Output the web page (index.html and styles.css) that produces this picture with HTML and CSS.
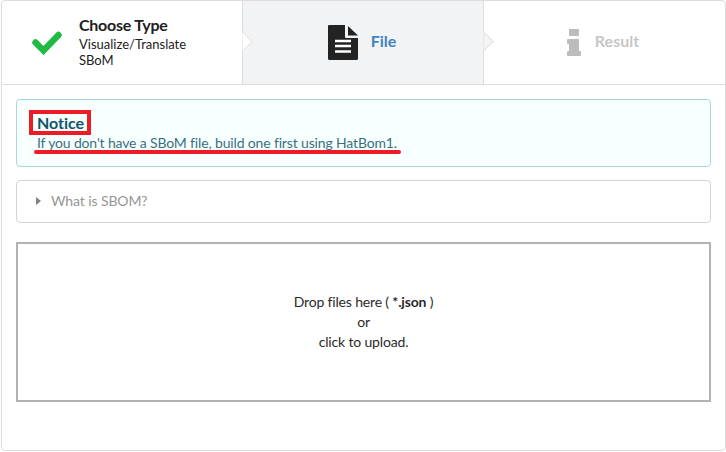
FILE: index.html
```html
<!DOCTYPE html>
<html lang="en">
<head>
<meta charset="utf-8">
<title>SBoM upload</title>
<link rel="stylesheet" href="styles.css">
</head>
<body>
<main class="panel">
  <div class="steps">
    <div class="step step-first">
      <svg class="icon-check" width="30" height="24" viewBox="0 0 30 24" aria-hidden="true"><path d="M3.5 11.5 L11.5 19.5 L26.5 4" fill="none" stroke="#21ba45" stroke-width="6.4" stroke-linejoin="miter" stroke-linecap="round"/></svg>
      <div class="step-text">
        <div class="step-title">Choose Type</div>
        <div class="step-desc">Visualize/Translate<br>SBoM</div>
      </div>
      <span class="chevron"></span>
    </div>
    <div class="step step-active">
      <svg class="icon-file" width="30" height="35" viewBox="0 0 30 35" aria-hidden="true">
        <path d="M1 0 H17 V12 a1 1 0 0 0 1 1 H30 V33.5 a1.5 1.5 0 0 1 -1.5 1.5 H1.5 A1.5 1.5 0 0 1 0 33.5 V1 A1 1 0 0 1 1 0 Z" fill="#232323"/>
        <path d="M20 1 L30 10.5 H20 Z" fill="#232323"/>
        <path d="M7 16 H23 M7 21 H23 M7 26.5 H23" stroke="#fff" stroke-width="2.4"/>
      </svg>
      <div class="step-label label-active">File</div>
      <span class="chevron chevron-active"></span>
    </div>
    <div class="step step-disabled">
      <svg class="icon-info" width="14" height="27" viewBox="0 0 14 27" aria-hidden="true">
        <path d="M3 0 H11 a1 1 0 0 1 1 1 V6 a1 1 0 0 1 -1 1 H3 a1 1 0 0 1 -1 -1 V1 a1 1 0 0 1 1 -1 Z M1 10 H11 a1 1 0 0 1 1 1 V22 H13 a1 1 0 0 1 1 1 V26 a1 1 0 0 1 -1 1 H1 a1 1 0 0 1 -1 -1 V23 a1 1 0 0 1 1 -1 H2 V15 H1 a1 1 0 0 1 -1 -1 V11 a1 1 0 0 1 1 -1 Z" fill="#bcbcbc"/>
      </svg>
      <div class="step-label label-disabled">Result</div>
    </div>
  </div>
  <div class="content">
    <div class="notice">
      <div class="notice-title"><span class="mark-box">Notice</span></div>
      <div class="notice-text"><span class="mark-line">If you don't have a SBoM file, build one first using HatBom1.</span></div>
    </div>
    <div class="accordion"><span class="caret"></span>What is SBOM?</div>
    <div class="dropzone">
      <div>Drop files here ( <b>*.json</b> )</div>
      <div>or</div>
      <div>click to upload.</div>
    </div>
  </div>
</main>
</body>
</html>
```
FILE: styles.css
```css
* { box-sizing: border-box; }
html, body { margin: 0; padding: 0; background: #fff; }
body {
  width: 726px;
  height: 452px;
  overflow: hidden;
  font-family: Lato, "Liberation Sans", sans-serif;
  font-size: 14px;
  color: #212121;
}
.panel {
  width: 725px;
  height: 451px;
  margin-left: 1px;
  border: 1px solid #dcdcdd;
  border-radius: 4px;
}
.steps {
  display: flex;
  height: 84px;
  border-bottom: 1px solid #dcdcdd;
}
.step {
  position: relative;
  display: flex;
  align-items: center;
  justify-content: center;
  height: 83px;
  border-right: 1px solid #dcdcdd;
}
.step-first { width: 241px; justify-content: flex-start; padding-left: 30px; }
.step-active { width: 241px; background: #f2f3f5; padding-right: 2px; }
.step-disabled { flex: 1; border-right: 0; padding-right: 3px; }
.chevron {
  position: absolute;
  z-index: 1;
  top: 33px;
  right: -8px;
  width: 15px;
  height: 15px;
  background: #fff;
  border: solid #dcdcdd;
  border-width: 1px 1px 0 0;
  transform: rotate(45deg);
  clip-path: polygon(0 0, 100% 0, 100% 100%);
}
.chevron-active { background: #f2f3f5; }
.icon-check { flex: none; margin-right: 17px; }
.icon-file { flex: none; margin-right: 13px; }
.icon-info { flex: none; margin-right: 14px; }
.step-title { font-size: 16px; font-weight: 700; line-height: 19px; margin-bottom: 2px; letter-spacing: -0.25px; color: #212121; }
.step-desc { font-size: 13px; line-height: 16px; margin-bottom: 2px; color: #212121; }
.step-label { font-size: 16px; font-weight: 700; margin-bottom: 5px; }
.label-active { color: #4183c4; }
.label-disabled { color: #c6c6c6; }
.content { padding: 14px 14px 0; }
.notice {
  height: 68px;
  padding: 13px 20px 0;
  background: #f8ffff;
  border: 1px solid #a9d5de;
  border-radius: 4px;
  color: #38707f;
}
.notice-title { font-size: 16px; font-weight: 700; line-height: 19px; letter-spacing: -0.05px; color: #0e566c; }
.notice-text { font-size: 14px; line-height: 20px; margin-top: 1px; letter-spacing: -0.15px; }
.mark-box { position: relative; }
.mark-box::after {
  content: "";
  position: absolute;
  left: -8px;
  right: -7px;
  top: -3px;
  bottom: -3px;
  border: 4px solid #ed1c24;
}
.mark-line { position: relative; }
.mark-line::after {
  content: "";
  position: absolute;
  left: -3px;
  right: -4px;
  bottom: -3px;
  height: 4px;
  background: #ed1c24;
  border-radius: 2px;
}
.accordion {
  display: flex;
  align-items: center;
  height: 43px;
  margin-top: 13px;
  padding: 0 0 2px 19px;
  border: 1px solid #d4d4d5;
  border-radius: 4px;
  font-size: 14px;
  letter-spacing: -0.1px;
  color: #969696;
}
.caret {
  width: 0;
  height: 0;
  margin-right: 10px;
  border-left: 5px solid #808080;
  border-top: 4px solid transparent;
  border-bottom: 4px solid transparent;
}
.dropzone {
  display: flex;
  flex-direction: column;
  align-items: center;
  justify-content: center;
  height: 160px;
  margin-top: 19px;
  border: 2px solid #b3b3b3;
  font-size: 14px;
  line-height: 20px;
  letter-spacing: -0.16px;
  color: #2a2a2a;
}
.dropzone b { font-weight: 700; }
```
